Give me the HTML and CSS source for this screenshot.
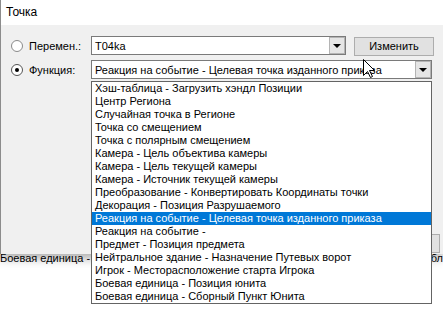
FILE: index.html
```html
<!DOCTYPE html>
<html lang="ru">
<head>
    <meta charset="UTF-8">
    <title>Точка</title>
    <link rel="stylesheet" href="styles.css">
</head>
<body>
    <div class="dialog">
        <div class="titlebar">Точка</div>
        <div class="dlg-body">
            <div class="row">
                <span class="radio"></span>
                <span class="label">Перемен.:</span>
                <div class="combo combo-var">
                    <span class="combo-text">T04ka</span>
                    <span class="combo-btn"><span class="arrow"></span></span>
                </div>
                <button class="btn">Изменить</button>
            </div>
            <div class="row">
                <span class="radio checked"></span>
                <span class="label">Функция:</span>
                <div class="combo combo-func">
                    <span class="combo-text">Реакция на событие - Целевая точка изданного приказа</span>
                    <span class="combo-btn"><span class="arrow"></span></span>
                </div>
            </div>
            <div class="footer">
                <button class="btn">OK</button>
            </div>
        </div>
    </div>

    <div class="behind">
        <span>Боевая единица -</span>
        <span>бл</span>
    </div>

    <ul class="droplist">
        <li>Хэш-таблица - Загрузить хэндл Позиции</li>
        <li>Центр Региона</li>
        <li>Случайная точка в Регионе</li>
        <li>Точка со смещением</li>
        <li>Точка с полярным смещением</li>
        <li>Камера - Цель объектива камеры</li>
        <li>Камера - Цель текущей камеры</li>
        <li>Камера - Источник текущей камеры</li>
        <li>Преобразование - Конвертировать Координаты точки</li>
        <li>Декорация - Позиция Разрушаемого</li>
        <li class="selected">Реакция на событие - Целевая точка изданного приказа</li>
        <li>Реакция на событие -</li>
        <li>Предмет - Позиция предмета</li>
        <li>Нейтральное здание - Назначение Путевых ворот</li>
        <li>Игрок - Месторасположение старта Игрока</li>
        <li>Боевая единица - Позиция юнита</li>
        <li>Боевая единица - Сборный Пункт Юнита</li>
    </ul>

    <svg class="cursor" width="13" height="20" viewBox="0 0 13 20">
        <path d="M0.5 0.5 L0.5 16.5 L4.5 12.5 L7.5 18.5 L9.5 17.5 L6.5 11.5 L11.5 11.5 Z" fill="#fff" stroke="#000" stroke-width="1"/>
    </svg>
</body>
</html>
```

FILE: styles.css
```css
body {
    margin: 0;
    width: 443px;
    height: 312px;
    overflow: hidden;
    background-color: #ffffff;
    font-family: "Liberation Sans", Arial, sans-serif;
    font-size: 11px;
    color: #000;
}
.dialog {
    border-left: 1px solid #8c8c8c;
    box-shadow: 0 4px 10px rgba(0, 0, 0, 0.35);
    position: relative;
    z-index: 1;
}
.titlebar {
    height: 25px;
    background-color: #fff;
    font-size: 12px;
    line-height: 25px;
    padding-left: 5px;
}
.dlg-body {
    height: 218px;
    padding-top: 11px;
    background-color: #f0f0f0;
    display: flex;
    flex-direction: column;
    gap: 5px;
}
.row {
    display: flex;
    align-items: center;
    height: 19px;
}
.radio {
    box-sizing: border-box;
    width: 12px;
    height: 12px;
    margin-left: 10px;
    border: 1px solid #8a8a8a;
    border-radius: 50%;
    background-color: #fff;
    display: flex;
    align-items: center;
    justify-content: center;
}
.radio.checked {
    border-color: #555;
}
.radio.checked::after {
    content: "";
    width: 4px;
    height: 4px;
    border-radius: 50%;
    background-color: #000;
}
.label {
    width: 62px;
    margin-left: 6px;
}
.combo {
    box-sizing: border-box;
    height: 19px;
    border: 1px solid #7a7a7a;
    background-color: #fff;
    display: flex;
    align-items: center;
    justify-content: space-between;
}
.combo-var {
    width: 255px;
}
.combo-func {
    width: 341px;
}
.combo-text {
    padding-left: 3px;
    white-space: nowrap;
}
.combo-btn {
    box-sizing: border-box;
    width: 16px;
    height: 17px;
    background-color: #e5e5e5;
    border: 1px solid #b4b4b4;
    display: flex;
    align-items: center;
    justify-content: center;
}
.arrow {
    width: 0;
    height: 0;
    border-left: 4px solid transparent;
    border-right: 4px solid transparent;
    border-top: 4px solid #000;
}
.btn {
    box-sizing: border-box;
    width: 80px;
    height: 19px;
    margin-left: 8px;
    margin-top: 1px;
    padding: 0;
    font-family: inherit;
    font-size: 11px;
    background-color: #e1e1e1;
    border: 1px solid #adadad;
    color: #000;
}
.footer {
    margin-top: auto;
    margin-bottom: 1px;
    display: flex;
    justify-content: flex-end;
    padding-right: 3px;
}
.behind {
    height: 58px;
    margin-top: -2px;
    display: flex;
    justify-content: space-between;
    white-space: nowrap;
    line-height: 13px;
}
.droplist {
    position: absolute;
    left: 91px;
    top: 81px;
    z-index: 2;
    width: 339px;
    margin: 0;
    padding: 0;
    list-style: none;
    background-color: #fff;
    border: 1px solid #646464;
}
.droplist li {
    height: 13px;
    line-height: 13px;
    padding-left: 3px;
    white-space: nowrap;
}
.droplist .selected {
    background-color: #0078d7;
    color: #fff;
}
.cursor {
    position: absolute;
    left: 363px;
    top: 59px;
    z-index: 3;
}
```
